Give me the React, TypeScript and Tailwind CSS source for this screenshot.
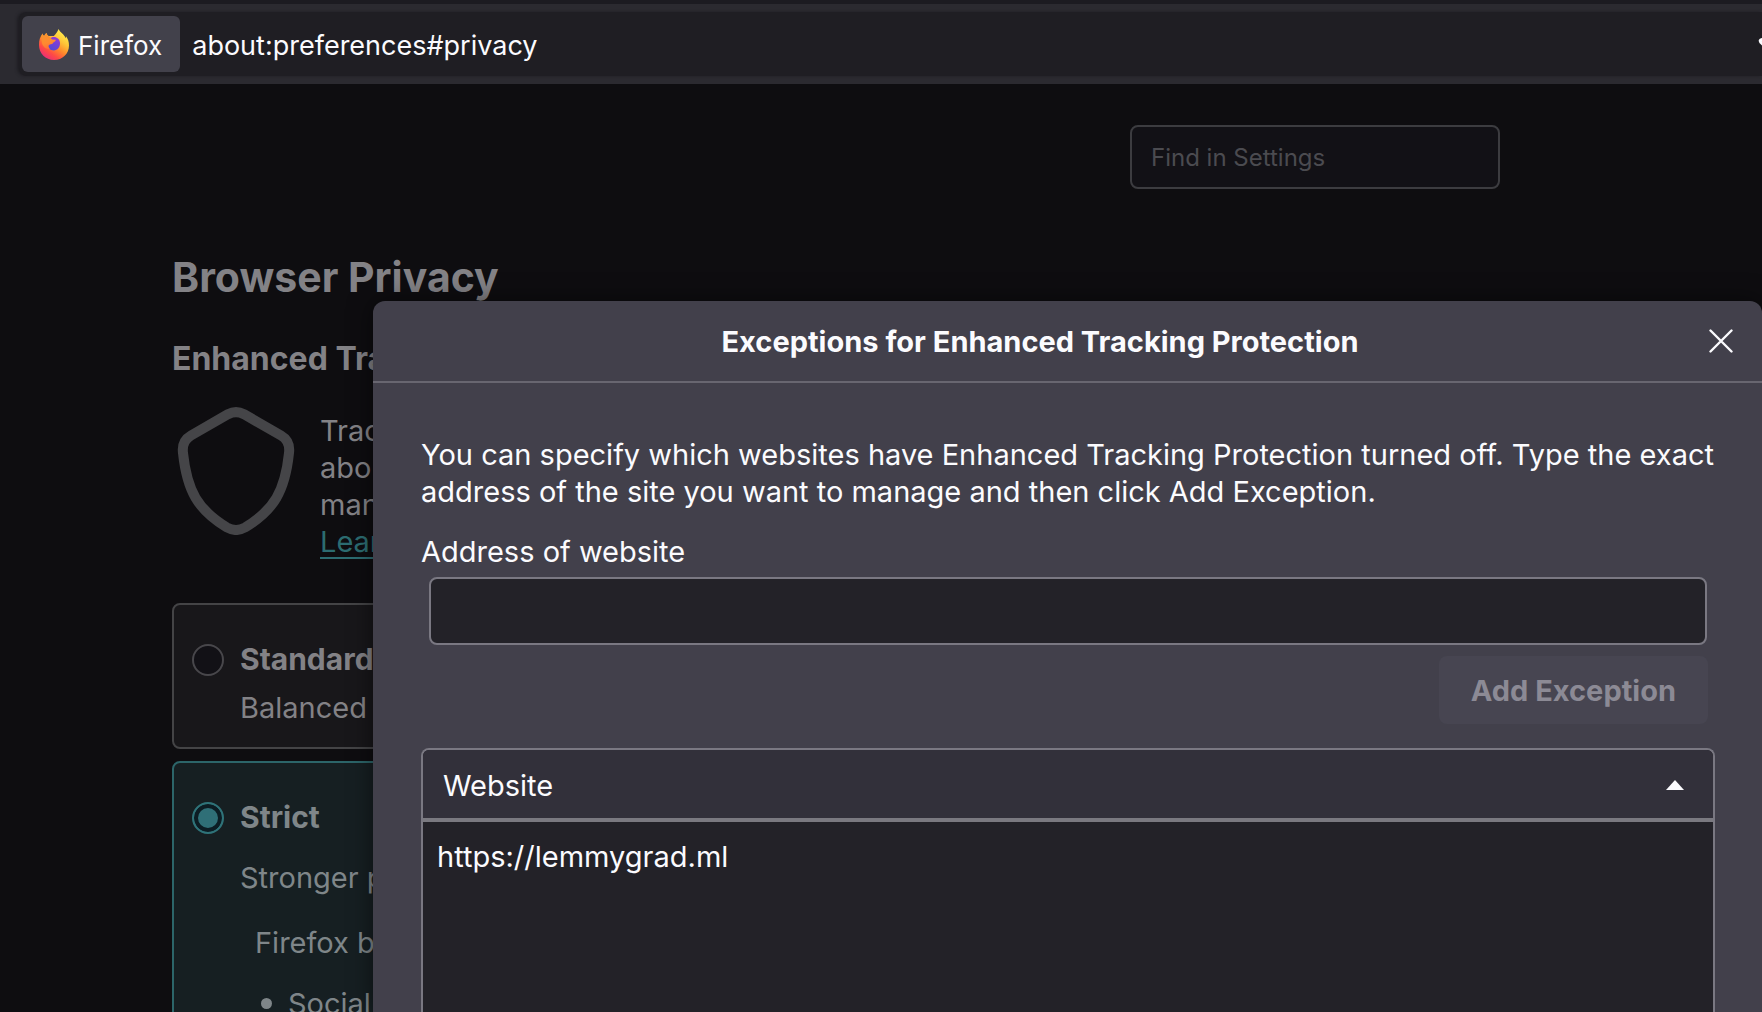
import React from 'react';

function FirefoxLogo() {
  return (
    <svg viewBox="0 0 30 31" className="h-[31px] w-[30px] shrink-0" aria-hidden="true">
      <defs>
        <linearGradient id="flame" x1="25" y1="2" x2="6" y2="29" gradientUnits="userSpaceOnUse">
          <stop offset="0" stopColor="#fff14f" />
          <stop offset="0.3" stopColor="#ffc638" />
          <stop offset="0.55" stopColor="#ff8a2b" />
          <stop offset="0.78" stopColor="#ff4a45" />
          <stop offset="1" stopColor="#ea2d78" />
        </linearGradient>
        <linearGradient id="globe" x1="19" y1="7" x2="12" y2="22" gradientUnits="userSpaceOnUse">
          <stop offset="0" stopColor="#a03bd0" />
          <stop offset="0.5" stopColor="#7340d8" />
          <stop offset="1" stopColor="#4f4bd0" />
        </linearGradient>
        <linearGradient id="head" x1="6" y1="5" x2="12" y2="22" gradientUnits="userSpaceOnUse">
          <stop offset="0" stopColor="#f79430" />
          <stop offset="0.5" stopColor="#ff8a30" />
          <stop offset="1" stopColor="#ff6238" />
        </linearGradient>
      </defs>
      <path
        d="M19.5 0C18.6 3 16.8 4.9 14.8 7H9.6C8.4 6.4 7.8 5.4 7.6 4C6.4 4.8 5.6 5.8 5.2 7C4.3 6.6 3.7 5.8 3.5 4.6C1.2 7.6 0 11.4 0 16C0 24.4 6.6 31 15 31C23.6 31 30 24.4 30 16.4C30 12.6 28.9 9.6 27 7.2C27 8 26.9 8.6 26.6 9.2C25.5 5.4 21.2 3.8 19.5 0Z"
        fill="url(#flame)"
      />
      <path d="M13.5 8C17.6 7.4 20.8 9.8 21 14C21.2 18.4 18.3 21.4 14.8 21.4C11.2 21.4 8.4 18.8 8.6 15.2C8.8 11.8 11 9 13.5 8Z" fill="url(#globe)" />
      <path
        d="M3.5 4.6C3.7 5.8 4.3 6.6 5.2 7C5.6 5.8 6.4 4.8 7.6 4C7.8 5.8 8.8 7 10.6 7.8C11.6 8.8 12 9.8 13.2 10.4L16.8 10.8C16.8 12.4 15.2 13 14 13.8C13.8 15.4 12.2 15 10.4 15.8C9 16.6 9.4 18.4 11 20C7 20.4 3.4 17.6 2.8 13C2.2 9.6 2.4 7 3.5 4.6Z"
        fill="url(#head)"
      />
    </svg>
  );
}

function Toolbar() {
  return (
    <header className="shrink-0 border-t-4 border-[#1c1b21] bg-[#2b2a30] py-2 pl-[19px] text-[#fbfbfe]">
      <div className="flex h-16 items-center rounded-l-lg bg-[#1f1e23] pl-[3px] shadow-[-2px_0_3px_#1f1e23]">
        <button type="button" className="flex h-14 shrink-0 items-center gap-[9px] rounded-md bg-[#42414b] pr-[18px] pl-[17px] text-[26px]">
          <FirefoxLogo />
          <span className="pt-0.5">Firefox</span>
        </button>
        <input
          aria-label="Address bar"
          defaultValue="about:preferences#privacy"
          className="ml-3 h-14 min-w-0 flex-1 bg-transparent pt-0.5 text-[27px] outline-none"
        />
        <button type="button" aria-label="Bookmark this page" className="w-1 overflow-hidden">
          <svg viewBox="0 0 32 32" className="size-8 max-w-none" fill="none" stroke="#fbfbfe" strokeWidth="3" strokeLinejoin="round">
            <path d="M16 2l4 8 8 1.5q3 .5 1 2.5l-6 6 2 9-9-4-9 4 2-9-6-5.500q-2-2.500 1-3l8-1.500z" />
          </svg>
        </button>
      </div>
    </header>
  );
}

function Shield() {
  return (
    <svg viewBox="0 0 118 128" className="mt-7 ml-[5px] h-32 w-[118px] shrink-0" fill="none" stroke="#454548" strokeWidth="10" aria-hidden="true">
      <path d="M51 7.2Q59 3 67 7.2L104 28.5Q113.5 34 112 46C108 84 97 103 68 120.5Q59 125.5 50 120.5C21 103 10 84 6 46Q4.5 34 14 28.5Z" />
    </svg>
  );
}

function Settings() {
  return (
    <div className="max-w-[1500px] pt-[41px] pl-[172px] text-[29px] leading-[37px] text-[#838286]">
      <div className="flex justify-end">
        <input
          type="search"
          aria-label="Find in Settings"
          placeholder="Find in Settings"
          className="h-16 w-[370px] rounded-lg border-2 border-[#3c3c40] bg-[#121116] px-[19px] text-2xl outline-none placeholder:text-[#4b4b50]"
        />
      </div>
      <h1 className="mt-16 text-[41px] leading-[48px] font-bold">Browser Privacy</h1>
      <h2 className="mt-[38px] text-[32px] leading-10 font-bold whitespace-nowrap">Enhanced Tra</h2>
      <div className="flex gap-6">
        <Shield />
        <div className="pt-[33px] pl-px">
          <p>
            Trac
            <br />
            abo
            <br />
            man
          </p>
          <a href="#learn" className="text-[#2c6c71] underline decoration-2 underline-offset-[5px]">
            Lear
          </a>
        </div>
      </div>

      <div className="mt-[43px] rounded-lg border-2 border-[#444446] bg-[#18171a] pt-9 pr-4 pb-[21px] pl-[18px]">
        <label className="flex items-center gap-4 text-[30px] font-bold">
          <input type="radio" name="protection" className="size-8 appearance-none rounded-full border-2 border-[#48474b] bg-[#121116]" />
          Standard
        </label>
        <p className="mt-[11px] pl-12">Balanced</p>
      </div>

      <div className="mt-3 rounded-lg border-2 border-[#2c6569] bg-[#161f22] pt-9 pr-4 pb-[21px] pl-[18px]">
        <label className="flex items-center gap-4 text-[30px] font-bold text-[#7f8689]">
          <input
            type="radio"
            name="protection"
            defaultChecked
            className="size-8 appearance-none rounded-full border-2 border-[#2f7379] bg-[#2f6f77] shadow-[inset_0_0_0_4px_#0c1d24]"
          />
          Strict
        </label>
        <p className="mt-[23px] pl-12 text-[#7f8689]">Stronger p</p>
        <div className="pl-[63px] text-[#7f8689]">
          <p className="mt-7">Firefox b</p>
          <ul className="mt-6">
            <li className="flex items-center gap-4 pl-1">
              <span className="ml-0.5 size-[11px] rounded-full bg-[#7f8689]" />
              Social
            </li>
          </ul>
        </div>
      </div>
    </div>
  );
}

function ExceptionsDialog() {
  return (
    <section
      role="dialog"
      aria-labelledby="dialog-title"
      className="absolute top-[217px] right-0 bottom-0 left-[373px] flex flex-col rounded-t-xl bg-[#42404b] text-[29px] leading-[37px] text-[#fbfbfe] shadow-[0_0_24px_rgba(0,0,0,0.5)]"
    >
      <div className="flex h-[82px] shrink-0 items-center border-b-2 border-[#686670] pr-[27px]">
        <h2 id="dialog-title" className="flex-1 text-center font-bold">
          Exceptions for Enhanced Tracking Protection
        </h2>
        <button type="button" aria-label="Close" className="flex size-7 items-center justify-center">
          <svg viewBox="0 0 24 24" className="size-6" stroke="#fbfbfe" strokeWidth="2.4" strokeLinecap="round">
            <path d="M1.5 1.5l21 21M22.5 1.5l-21 21" />
          </svg>
        </button>
      </div>

      <div className="flex min-h-0 flex-1 flex-col pt-[53px] pr-[47px] pl-12">
        <p className="-mr-4">
          You can specify which websites have Enhanced Tracking Protection turned off. Type the exact address of the site you want to manage and then
          click Add Exception.
        </p>
        <label htmlFor="site" className="mt-[23px]">
          Address of website
        </label>
        <input id="site" type="text" className="mx-2 mt-[7px] h-[68px] shrink-0 rounded-lg border-2 border-[#7a7882] bg-[#232228] px-4 outline-none" />
        <button type="button" disabled className="mt-[11px] mr-[7px] h-[68px] shrink-0 self-end rounded-lg bg-[#474551] px-8 font-bold text-[#8c8a95]">
          Add Exception
        </button>

        <div className="mt-6 min-h-0 flex-1 overflow-hidden rounded-t-lg border-2 border-b-0 border-[#7a7882] bg-[#232228]">
          <table className="w-full border-separate border-spacing-0 text-left">
            <thead>
              <tr>
                <th className="border-b-4 border-[#7a7980] bg-[#32303a] p-0 font-normal">
                  <button type="button" className="flex h-[68px] w-full items-center justify-between pt-0.5 pr-[29px] pl-5">
                    Website
                    <svg viewBox="0 0 18 10" className="h-2.5 w-[18px]" fill="#fbfbfe" aria-hidden="true">
                      <path d="M9 0l9 10H0z" />
                    </svg>
                  </button>
                </th>
              </tr>
            </thead>
            <tbody>
              <tr>
                <td className="px-3.5 pt-4">https://lemmygrad.ml</td>
              </tr>
            </tbody>
          </table>
        </div>
      </div>
    </section>
  );
}

export default function App() {
  return (
    <div className="flex h-screen flex-col overflow-hidden bg-[#0e0d10] font-['Inter',sans-serif]">
      <Toolbar />
      <main className="relative min-h-0 flex-1 overflow-hidden">
        <Settings />
        <ExceptionsDialog />
      </main>
    </div>
  );
}
